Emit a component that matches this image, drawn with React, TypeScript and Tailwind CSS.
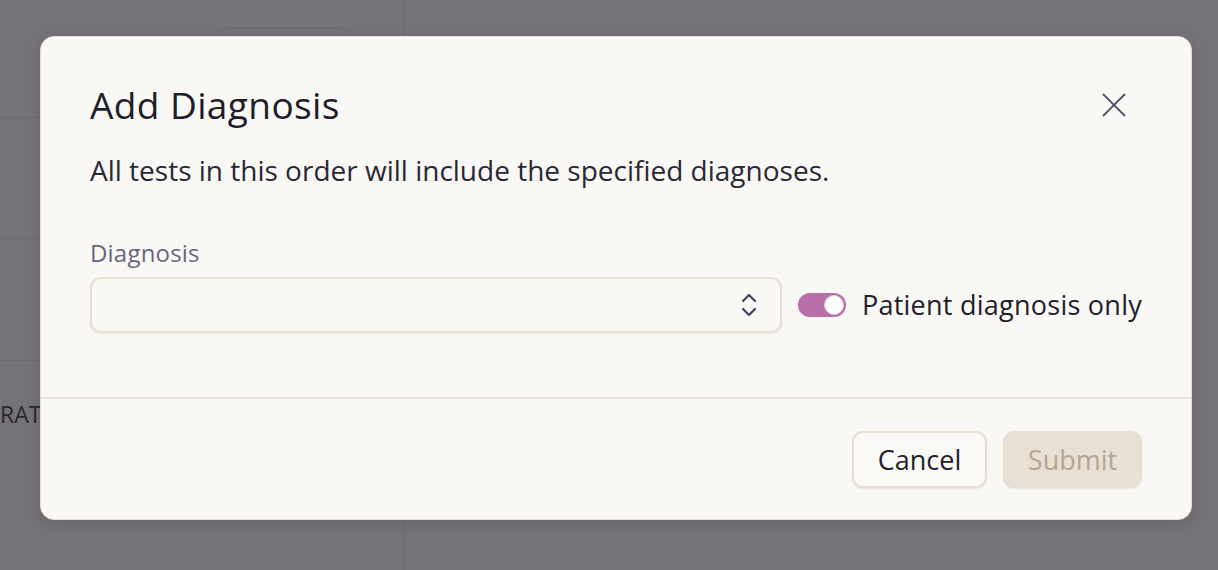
import { useState } from 'react';

function CloseIcon() {
  return (
    <svg width="24" height="24" viewBox="0 0 24 24" fill="none" stroke="#56516b" strokeWidth="1.8" strokeLinecap="round">
      <path d="M1.5 1.5 L22.5 22.5" />
      <path d="M22.5 1.5 L1.5 22.5" />
    </svg>
  );
}

function UpDownIcon() {
  return (
    <svg width="16" height="24" viewBox="0 0 16 24" fill="none" stroke="#433f5a" strokeWidth="2.2" strokeLinecap="round" strokeLinejoin="round">
      <path d="M2 8 L8 2 L14 8" />
      <path d="M2 16 L8 22 L14 16" />
    </svg>
  );
}

// page behind the dialog, already dimmed by the overlay
function Backdrop() {
  return (
    <div className="flex h-full w-full bg-[#767378]">
      <div className="flex h-full w-[404px] flex-col border-r border-[#6c696e]">
        <div className="h-[118px] border-b border-[#6d6a6f] pl-[218px] pt-[28px]">
          <div className="h-[60px] w-[136px] rounded-xl border border-[#6b6870]" />
        </div>
        <div className="h-[121px] border-b border-[#6d6a6f]" />
        <div className="h-[122px] border-b border-[#6d6a6f]" />
        <div className="pt-[38px]">
          <span className="text-[23px] leading-[30px] text-[#29282e]">RAT</span>
        </div>
      </div>
      <div className="flex-1" />
    </div>
  );
}

export default function App() {
  const [patientOnly, setPatientOnly] = useState(true);

  return (
    <div className="relative h-[570px] w-full overflow-hidden font-['Open_Sans',sans-serif]">
      <Backdrop />

      <div className="absolute left-[40px] top-[36px] w-[1152px] rounded-[14px] border border-[#e6ddce] bg-[#f9f8f4] shadow-[0_4px_16px_rgba(0,0,0,0.12)]">
        <div className="px-[49px] pb-[64px] pt-[46px]">
          <div className="flex items-center justify-between">
            <h2 className="text-[37px] font-medium leading-[44px] tracking-[0.4px] text-[#1f1d2b]">Add Diagnosis</h2>
            <button className="mr-[16px] flex h-[24px] w-[24px] items-center justify-center">
              <CloseIcon />
            </button>
          </div>

          <p className="mt-[25px] text-[28px] leading-[36px] text-[#2a2836]">
            All tests in this order will include the specified diagnoses.
          </p>

          <label className="mt-[49px] block text-[24px] font-medium leading-[32px] tracking-[0.2px] text-[#6b6580]">Diagnosis</label>

          <div className="mt-[8px] flex items-center gap-4">
            <div className="flex h-[56px] flex-1 items-center justify-end rounded-[11px] border-2 border-[#e8e0d2] bg-[#f9f8f4] pr-[23px] shadow-[0_1px_2px_rgba(120,100,70,0.12)]">
              <UpDownIcon />
            </div>
            <button
              onClick={() => setPatientOnly((v) => !v)}
              className={`flex h-[24px] w-[48px] items-center rounded-full px-[2px] ${patientOnly ? 'justify-end bg-[#b96fa7]' : 'justify-start bg-[#d8cfc2]'}`}
            >
              <span className="h-[20px] w-[20px] rounded-full border border-[#e9c9e0] bg-white" />
            </button>
            <span className="text-[27px] font-medium leading-[32px] tracking-[0.25px] text-[#22202c]">Patient diagnosis only</span>
          </div>
        </div>

        <div className="h-[2px] bg-[#ebe5db]" />

        <div className="flex justify-end gap-4 px-[49px] pb-[31px] pt-[32px]">
          <button className="h-[57px] w-[135px] rounded-[11px] border-2 border-[#e8dfcf] bg-[#faf9f5] text-[27px] leading-none text-[#23212d] shadow-[0_1px_2px_rgba(120,100,70,0.12)]">
            Cancel
          </button>
          <button
            disabled
            className="h-[57px] w-[139px] rounded-[11px] bg-[#e8e0d4] text-[27px] leading-none text-[#b6a590] shadow-[0_1px_2px_rgba(120,100,70,0.1)]"
          >
            Submit
          </button>
        </div>
      </div>
    </div>
  );
}
